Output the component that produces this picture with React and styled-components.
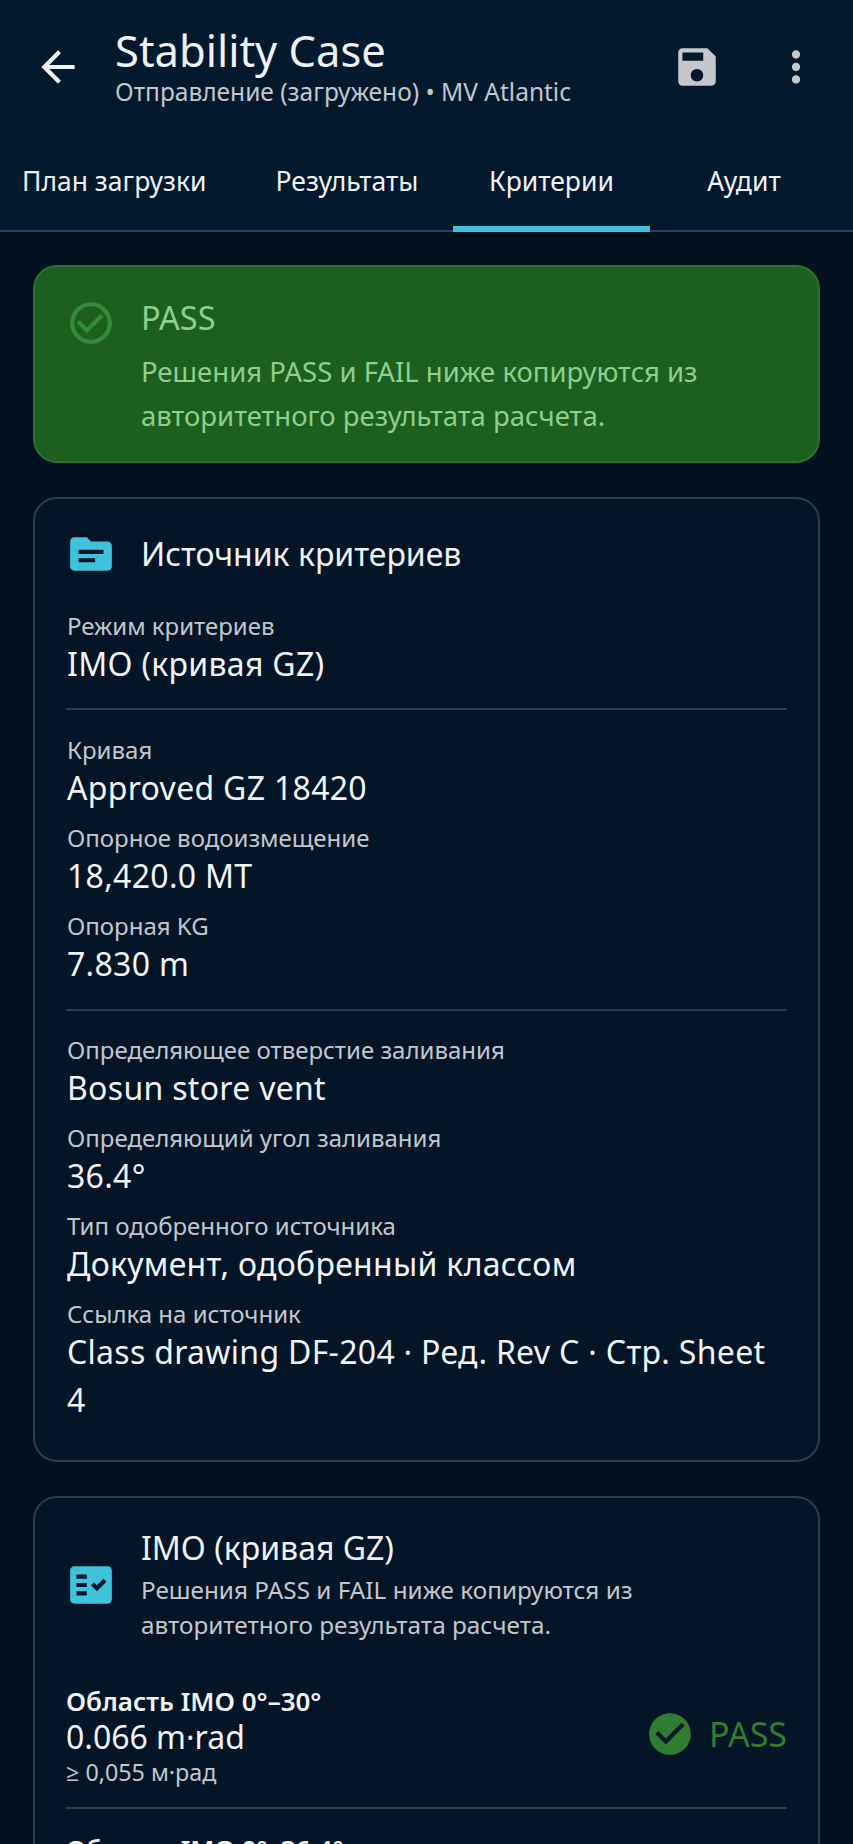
import React from "react";
import styled, { createGlobalStyle } from "styled-components";
import { MdArrowBack, MdSave, MdMoreVert, MdTopic, MdFactCheck, MdCheckCircle, MdCheckCircleOutline } from "react-icons/md";

const Global = createGlobalStyle`
  html, body { margin: 0; padding: 0; background: #02111f; }
  body { font-family: "Noto Sans", "Open Sans", sans-serif; }
  * { box-sizing: border-box; }
  svg { flex: none; }
`;
const Page = styled.div`
  width: 853px; height: 1844px; overflow: hidden; background: #02111f; color: #f0f3f8;
`;
const Header = styled.header`
  background: #03192e; border-bottom: 2px solid #2b4052; height: 232px; display: flex; flex-direction: column;
`;
const TopBar = styled.div`
  display: flex; align-items: flex-start; height: 138px; padding: 26px 32px 0 33px;
`;
const Back = styled.div`
  display: flex; width: 50px; height: 50px; margin-top: 16px; color: #f1f3f8; font-size: 50px; flex: none;
`;
const TitleBox = styled.div`
  flex: 1; margin-left: 32px; min-width: 0;
`;
const Title = styled.div`
  font-size: 43.5px; line-height: 48px; color: #eef1f6;
`;
const Sub = styled.div`
  font-size: 24.5px; line-height: 30px; color: #c3c7cd; margin-top: 3px;
`;
const Actions = styled.div`
  display: flex; align-items: center; gap: 49px; margin-top: 16px; color: #c5c7cc;
`;
const IconSlot = styled.div`
  display: flex; font-size: 50px;
`;
const Tabs = styled.nav`
  display: flex; height: 92px; padding-left: 22px; align-items: stretch;
`;
const Tab = styled.div`
  display: flex; align-items: center; justify-content: ${p => p.$start ? "flex-start" : "center"}; position: relative;
  width: ${p => p.$width}px; flex: none;
  font-size: 26.5px; color: #eef1f6; padding-bottom: 6px; white-space: nowrap;
  ${p => p.$active && `&::after { content: ""; position: absolute; left: 0; right: 0; bottom: -2px; height: 6px; background: #3fc1dc; }`}
`;
const Body = styled.main`
  display: flex; flex-direction: column; gap: 34px; padding: 33px 33px 0;
`;
const Banner = styled.section`
  display: flex; gap: 25px; height: 198px; padding: 29px 30px 0 31px;
  background: #1c5f1f; border: 2px solid #2c7032; border-radius: 24px; color: #8fcf8f;
`;
const BannerIcon = styled.div`
  display: flex; font-size: 50px; color: #358a3b; margin-top: 2px; flex: none;
`;
const BannerTitle = styled.div`
  font-size: 32.5px; line-height: 44px; color: #8fcf8f;
`;
const BannerText = styled.div`
  font-size: 27.5px; line-height: 44px; margin-top: 10px;
`;
const Card = styled.section`
  background: #031526; border: 2px solid #2b3e50; border-radius: 24px; padding: ${p => p.$pt}px 31px 36px;
`;
const CardHead = styled.div`
  display: flex; align-items: center; gap: 25px;
`;
const CardIcon = styled.div`
  display: flex; font-size: 50px; color: #3fc3dd; flex: none;
`;
const CardTitle = styled.div`
  font-size: 32px; line-height: 40px; color: #eef1f6;
`;
const CardDesc = styled.div`
  font-size: 24.3px; line-height: 35px; color: #c3c7cd; margin-top: 4px;
`;
const Group = styled.div`
  padding: ${p => p.$pt}px 0 ${p => p.$pb}px; border-bottom: ${p => p.$line ? "2px solid #2b3e50" : "none"};
`;
const Label = styled.div`
  font-size: 24px; line-height: 28px; color: #c3c7cd; padding-left: 1px; margin-top: ${p => p.$first ? 0 : 12}px;
`;
const Value = styled.div`
  font-size: 32px; line-height: 48px; color: #f0f3f8; letter-spacing: .3px; padding-left: 1px;
`;
const Crit = styled.div`
  display: flex; align-items: center; justify-content: space-between; padding: 0 0 20px; border-bottom: 2px solid #2b3e50; margin-top: ${p => p.$mt}px;
`;
const CritName = styled.div`
  font-size: 26px; line-height: 32px; font-weight: 600; color: #f0f3f8;
`;
const CritValue = styled.div`
  font-size: 32px; line-height: 40px; color: #f0f3f8;
`;
const CritLimit = styled.div`
  font-size: 23.3px; line-height: 30px; color: #c3c7cd;
`;
const Status = styled.div`
  display: flex; align-items: center; gap: 14px; color: #2e7d32; font-size: 34px; margin-top: -4px;
`;
const StatusIcon = styled.div`
  display: flex; font-size: 50px;
`;

const Field = ({ label, value, first }) => (
  <>
    <Label $first={first}>{label}</Label>
    <Value>{value}</Value>
  </>
);

export default function App() {
  return (
    <Page>
      <Global />
      <Header>
        <TopBar>
          <Back><MdArrowBack /></Back>
          <TitleBox>
            <Title>Stability Case</Title>
            <Sub>Отправление (загружено) • MV Atlantic</Sub>
          </TitleBox>
          <Actions>
            <IconSlot><MdSave /></IconSlot>
            <IconSlot><MdMoreVert /></IconSlot>
          </Actions>
        </TopBar>
        <Tabs>
          <Tab $start $width={219}>План загрузки</Tab>
          <Tab $width={212}>Результаты</Tab>
          <Tab $active $width={197}>Критерии</Tab>
          <Tab $width={188}>Аудит</Tab>
        </Tabs>
      </Header>
      <Body>
        <Banner>
          <BannerIcon><MdCheckCircleOutline /></BannerIcon>
          <div>
            <BannerTitle>PASS</BannerTitle>
            <BannerText>Решения PASS и FAIL ниже копируются из авторитетного результата расчета.</BannerText>
          </div>
        </Banner>
        <Card $pt={30}>
          <CardHead>
            <CardIcon><MdTopic /></CardIcon>
            <CardTitle>Источник критериев</CardTitle>
          </CardHead>
          <Group $line $pt={33} $pb={20}>
            <Field first label="Режим критериев" value="IMO (кривая GZ)" />
          </Group>
          <Group $line $pt={26} $pb={21}>
            <Field first label="Кривая" value="Approved GZ 18420" />
            <Field label="Опорное водоизмещение" value="18,420.0 MT" />
            <Field label="Опорная KG" value="7.830 m" />
          </Group>
          <Group $pt={25} $pb={0}>
            <Field first label="Определяющее отверстие заливания" value="Bosun store vent" />
            <Field label="Определяющий угол заливания" value="36.4°" />
            <Field label="Тип одобренного источника" value="Документ, одобренный классом" />
            <Field label="Ссылка на источник" value="Class drawing DF-204 · Ред. Rev C · Стр. Sheet 4" />
          </Group>
        </Card>
        <Card $pt={30}>
          <CardHead>
            <CardIcon><MdFactCheck /></CardIcon>
            <div>
              <CardTitle>IMO (кривая GZ)</CardTitle>
              <CardDesc>Решения PASS и FAIL ниже копируются из авторитетного результата расчета.</CardDesc>
            </div>
          </CardHead>
          <Crit $mt={43}>
            <div>
              <CritName>Область IMO 0°–30°</CritName>
              <CritValue>0.066 m·rad</CritValue>
              <CritLimit>≥ 0,055 м·рад</CritLimit>
            </div>
            <Status>
              <StatusIcon><MdCheckCircle /></StatusIcon>
              PASS
            </Status>
          </Crit>
          <Crit $mt={24}>
            <div>
              <CritName>Область IMO 0°–36.4°</CritName>
            </div>
          </Crit>
        </Card>
      </Body>
    </Page>
  );
}
